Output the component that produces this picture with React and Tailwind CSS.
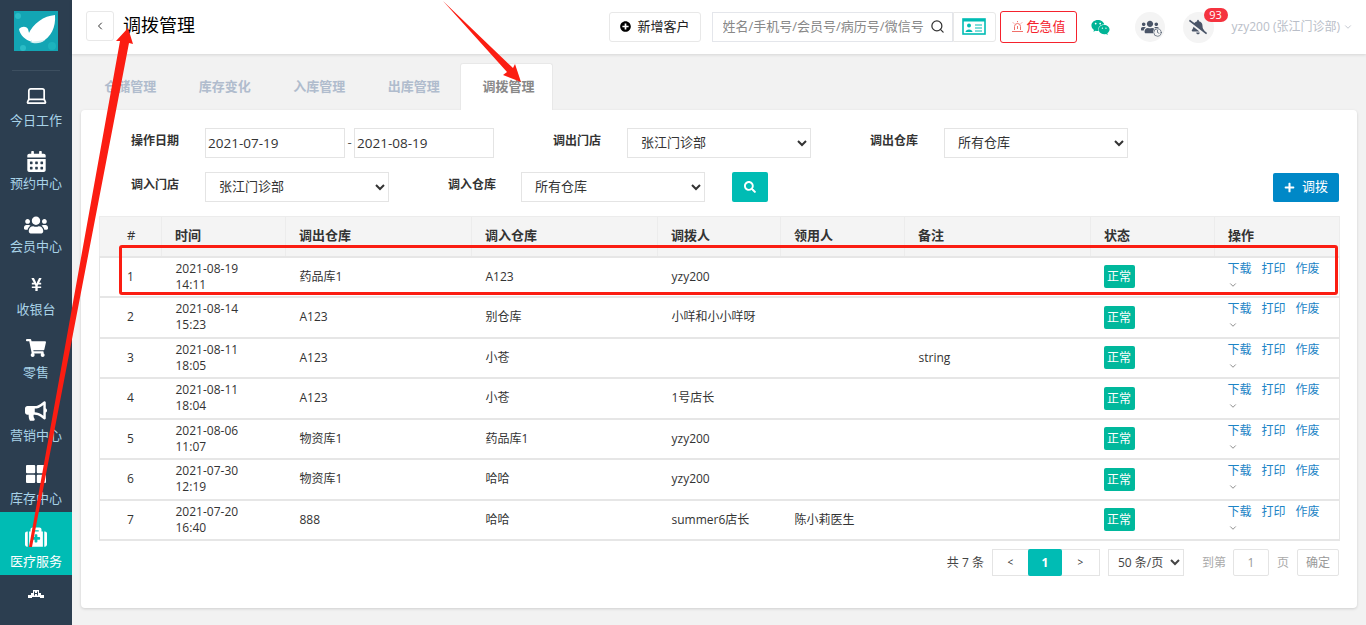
import React from 'react';
import { FaCalendarAlt, FaUsers, FaYenSign, FaShoppingCart, FaBullhorn, FaMedkit, FaPlusCircle, FaPlus, FaSearch, FaWeixin, FaBellSlash } from 'react-icons/fa';
import { Laptop, Search, ChevronDown, ChevronLeft, Clock } from 'lucide-react';

const menu = [
    { label: '今日工作', icon: <Laptop size={23} strokeWidth={1.8} /> },
    { label: '预约中心', icon: <FaCalendarAlt size={21} className="mt-[6px]" /> },
    { label: '会员中心', icon: <FaUsers size={24} className="mt-[6px]" /> },
    { label: '收银台', icon: <FaYenSign size={15} /> },
    { label: '零售', icon: <FaShoppingCart size={20} /> },
    { label: '营销中心', icon: <FaBullhorn size={22} /> },
    {
        label: '库存中心',
        icon: (
            <svg width="20" height="18" viewBox="0 0 20 18" fill="currentColor">
                <rect x="0" y="0" width="9.2" height="8.2" rx="1" />
                <rect x="10.8" y="0" width="9.2" height="8.2" rx="1" />
                <rect x="0" y="9.8" width="9.2" height="8.2" rx="1" />
                <rect x="10.8" y="9.8" width="9.2" height="8.2" rx="1" />
            </svg>
        ),
    },
    { label: '医疗服务', icon: <FaMedkit size={22} />, active: true },
];

const tabs = ['仓储管理', '库存变化', '入库管理', '出库管理', '调拨管理'];

const rows = [
    { id: 1, date: '2021-08-19', time: '14:11', out: '药品库1', into: 'A123', by: 'yzy200', taker: '', note: '' },
    { id: 2, date: '2021-08-14', time: '15:23', out: 'A123', into: '别仓库', by: '小咩和小小咩呀', taker: '', note: '' },
    { id: 3, date: '2021-08-11', time: '18:05', out: 'A123', into: '小苍', by: '', taker: '', note: 'string' },
    { id: 4, date: '2021-08-11', time: '18:04', out: 'A123', into: '小苍', by: '1号店长', taker: '', note: '' },
    { id: 5, date: '2021-08-06', time: '11:07', out: '物资库1', into: '药品库1', by: 'yzy200', taker: '', note: '' },
    { id: 6, date: '2021-07-30', time: '12:19', out: '物资库1', into: '哈哈', by: 'yzy200', taker: '', note: '' },
    { id: 7, date: '2021-07-20', time: '16:40', out: '888', into: '哈哈', by: 'summer6店长', taker: '陈小莉医生', note: '' },
];

const heads = [
    { t: '#', w: 'w-[62px]', c: 'pl-[27px]' },
    { t: '时间', w: 'w-[124px]', c: 'pl-[13px]' },
    { t: '调出仓库', w: 'w-[186px]', c: 'pl-[13px]' },
    { t: '调入仓库', w: 'w-[186px]', c: 'pl-[13px]' },
    { t: '调拨人', w: 'w-[123px]', c: 'pl-[13px]' },
    { t: '领用人', w: 'w-[124px]', c: 'pl-[13px]' },
    { t: '备注', w: 'w-[186px]', c: 'pl-[13px]' },
    { t: '状态', w: 'w-[124px]', c: 'pl-[13px]' },
    { t: '操作', w: 'w-[125px]', c: 'pl-[13px]' },
];

const Sidebar = () => (
    <aside className="w-[72px] shrink-0 h-[625px] bg-[#2c3e50] flex flex-col items-stretch overflow-hidden">
        <div className="h-[71px] shrink-0 pt-[11px] mx-3 border-b border-[#3d4f60]">
            <div className="ml-[2px] w-11 h-10 bg-[#13a5b4]">
                <svg width="44" height="40" viewBox="0 0 44 40">
                    <circle cx="4" cy="5" r="3" fill="#2bbcc6" />
                    <circle cx="9" cy="37" r="3" fill="#2bbcc6" />
                    <circle cx="38" cy="35" r="4" fill="#1cb3bd" />
                    <path d="M14 24 C19 12 30 5 41 4 C42 16 37 27 27 31 L18 31 C17 28 15 26 14 24 Z" fill="#fff" />
                    <path d="M5 18 C8 15 12 15 14 18 C15 23 17 27 18 31 C11 29 6 24 5 18 Z" fill="#fff" />
                    <path d="M16 31 L31 29 C27 33 20 33 16 31 Z" fill="#d5f0f2" />
                </svg>
            </div>
        </div>
        {menu.map((m) => (
            <div
                key={m.label}
                className={`h-[63px] shrink-0 flex flex-col items-center ${m.active ? 'bg-[#00bcb4] text-white' : 'text-[#a9d3e8]'}`}
            >
                <div className="h-[38px] pt-[11px] flex items-center justify-center text-white">{m.icon}</div>
                <div className="text-[13px] leading-[18px] mt-[2px]">{m.label}</div>
            </div>
        ))}
        <div className="flex justify-center pt-[15px] text-white">
            <svg width="16" height="9" viewBox="0 0 16 9" fill="currentColor">
                <path d="M5 0 H11 V3 H13 V5 H16 V8 H12 V7 H4 V8 H0 V5 H3 V3 H5 Z" />
                <path d="M6.5 1.5 V5.5 M9.5 1.5 V5.5 M6.5 3.5 H9.5" stroke="#2c3e50" strokeWidth="1" />
            </svg>
        </div>
    </aside>
);

const Header = () => (
    <header className="h-[54px] bg-white shadow-[0_1px_3px_rgba(0,0,0,0.12)] flex items-center pl-[14px] relative z-10">
        <button className="w-[28px] h-[30px] border border-[#e8e8e8] rounded-[3px] flex items-center justify-center text-[#333] -mt-[2px]">
            <ChevronLeft size={12} strokeWidth={2} />
        </button>
        <h1 className="ml-[9px] text-[18px] leading-6 text-black -mt-[4px]">调拨管理</h1>
        <div className="ml-auto flex items-center h-full">
            <button className="w-[92px] h-[30px] border border-[#e8e8e8] rounded-[3px] flex items-center justify-center gap-[7px] text-[13px] text-[#222] -mt-[1px]">
                <FaPlusCircle size={11} className="text-black" />
                新增客户
            </button>
            <div className="ml-[11px] w-[241px] h-[30px] border border-[#e4e6eb] flex items-center pl-[10px] pr-[7px] text-[13px] text-[#888] -mt-[1px]">
                <span className="flex-1 whitespace-nowrap overflow-hidden">姓名/手机号/会员号/病历号/微信号</span>
                <Search size={15} className="text-[#333]" />
            </div>
            <button className="w-[43px] h-[30px] border border-[#e8e8e8] rounded-r-[3px] flex items-center justify-center -mt-[1px]">
                <svg width="24" height="17" viewBox="0 0 24 17">
                    <rect x="1" y="1" width="22" height="15" fill="none" stroke="#00bcb4" strokeWidth="1.6" />
                    <rect x="1" y="1" width="22" height="2.5" fill="#00bcb4" />
                    <circle cx="7" cy="7.5" r="2" fill="#00bcb4" />
                    <path d="M3.5 14 C3.5 10.5 10.5 10.5 10.5 14 Z" fill="#00bcb4" />
                    <path d="M13 7 H20 M13 10 H20 M13 13 H20" stroke="#00bcb4" strokeWidth="1" />
                </svg>
            </button>
            <button className="ml-1 w-[77px] h-8 border border-[#f5222d] rounded-[3px] flex items-center justify-center gap-[3px] text-[13px] text-[#f5222d] -mt-[1px]">
                <svg width="13" height="13" viewBox="0 0 13 13" fill="none" stroke="#f0706a" strokeWidth="1">
                    <path d="M3.5 10 V6.5 A3 3 0 0 1 9.5 6.5 V10" />
                    <path d="M1 11.5 H12 M6.5 1 V2.2 M2 2.5 L3 3.5 M11 2.5 L10 3.5 M6.5 6 V9" />
                </svg>
                危急值
            </button>
            <div className="ml-[14px] w-[20px] flex justify-center">
                <FaWeixin size={19} className="text-[#00b496]" />
            </div>
            <div className="ml-[24px] relative w-[30px] h-[30px] rounded-full bg-[#f4f4f4] flex items-center justify-center text-[#4a5568]">
                <FaUsers size={18} />
                <Clock size={9} className="absolute right-[3px] bottom-[5px] bg-[#f4f4f4] rounded-full" />
            </div>
            <div className="ml-[18px] relative w-[31px] h-[31px] rounded-full bg-[#f4f4f4] flex items-center justify-center text-[#4a5568]">
                <FaBellSlash size={18} />
                <span className="absolute -top-[4px] left-[21px] w-6 h-[14px] rounded-full bg-[#f5333f] text-white text-[11px] leading-[14px] text-center">93</span>
            </div>
            <div className="ml-[18px] mr-[13px] flex items-center gap-[3px] text-[12px] text-[#b9bec8] whitespace-nowrap">
                yzy200 (张江门诊部)
                <ChevronDown size={10} strokeWidth={2} />
            </div>
        </div>
    </header>
);

const Label = ({ className, children }) => (
    <span className={`text-[12px] font-bold text-[#333] -mt-[4px] ${className}`}>{children}</span>
);

const Select = ({ className, children }) => (
    <select className={`h-[30px] border border-[#e4e4e4] bg-white pl-[9px] pb-[2px] text-[13px] text-[#333] ${className}`}>
        <option>{children}</option>
    </select>
);

const Filters = () => (
    <div className="pl-[50px] pr-[18px] pt-[18px]">
        <div className="flex items-center h-[30px]">
            <Label className="w-[74px]">操作日期</Label>
            <div className="w-[140px] h-[30px] border border-[#e4e4e4] pl-[2px] text-[13.5px] leading-[28px] text-[#333]">2021-07-19</div>
            <span className="w-[9px] text-center text-[13px] text-[#555]">-</span>
            <div className="w-[140px] h-[30px] border border-[#e4e4e4] pl-[2px] text-[13.5px] leading-[28px] text-[#333]">2021-08-19</div>
            <Label className="ml-[59px] w-[74px]">调出门店</Label>
            <Select className="w-[184px]">张江门诊部</Select>
            <Label className="ml-[59px] w-[74px]">调出仓库</Label>
            <Select className="w-[184px]">所有仓库</Select>
        </div>
        <div className="flex items-center h-[30px] mt-[14px]">
            <Label className="w-[74px]">调入门店</Label>
            <Select className="w-[184px]">张江门诊部</Select>
            <Label className="ml-[59px] w-[73px]">调入仓库</Label>
            <Select className="w-[184px]">所有仓库</Select>
            <button className="ml-[27px] -mt-[1px] w-9 h-[30px] rounded-[2px] bg-[#00bcb4] text-white flex items-center justify-center">
                <FaSearch size={12} />
            </button>
            <button className="ml-auto w-[66px] h-[29px] rounded-[2px] bg-[#0088c7] text-white text-[13px] flex items-center justify-center gap-[7px]">
                <FaPlus size={11} />
                调拨
            </button>
        </div>
    </div>
);

const Table = () => (
    <table className="ml-[18px] mt-[14px] w-[1240px] table-fixed border-collapse text-[12px] text-[#333]">
        <thead>
            <tr className="h-[40px] bg-[#f4f4f4]">
                {heads.map((h) => (
                    <th key={h.t} className={`${h.w} ${h.c} border-x border-t border-[#ececec] text-left text-[13px] font-bold text-[#333] align-bottom pb-[14px] leading-none`}>
                        <span className={h.t === '#' ? 'font-normal' : ''}>{h.t}</span>
                    </th>
                ))}
            </tr>
        </thead>
        <tbody>
            {rows.map((r) => (
                <tr key={r.id} className="h-[40.5px] border-t-2 border-[#e6e6e6]">
                    <td className="pl-[27px] border-l border-[#e6e6e6] text-[12px]">{r.id}</td>
                    <td className="pl-[14px] leading-4 whitespace-nowrap">{r.date}<br />{r.time}</td>
                    <td className="pl-[14px]">{r.out}</td>
                    <td className="pl-[14px]">{r.into}</td>
                    <td className="pl-[14px] whitespace-nowrap">{r.by}</td>
                    <td className="pl-[14px] whitespace-nowrap">{r.taker}</td>
                    <td className="pl-[14px]">{r.note}</td>
                    <td className="pl-[13px]">
                        <span className="inline-block w-[31px] h-[23px] rounded-[2px] bg-[#00b89c] text-white text-center leading-[23px]">正常</span>
                    </td>
                    <td className="pl-[13px] border-r border-[#e6e6e6] align-top pt-[3px]">
                        <div className="flex gap-[10px] text-[#1c84c6] leading-4">
                            <span>下载</span><span>打印</span><span>作废</span>
                        </div>
                        <ChevronDown size={10} className="text-[#777] mt-[3px]" />
                    </td>
                </tr>
            ))}
            <tr className="border-t-2 border-[#e6e6e6]"></tr>
        </tbody>
    </table>
);

const Pagination = () => (
    <div className="flex justify-end items-center mt-[9px] pr-[18px] text-[12px] text-[#555]">
        <span className="mr-2 text-[#444]">共 7 条</span>
        <div className="flex h-[27px] border border-[#e4e4e4] w-[108px]">
            <span className="w-[35px] flex items-center justify-center text-[10px] text-[#333]">&lt;</span>
            <span className="w-[34px] -my-px bg-[#00bcb4] rounded-[2px] text-white font-bold flex items-center justify-center">1</span>
            <span className="flex-1 flex items-center justify-center text-[10px] text-[#333]">&gt;</span>
        </div>
        <select className="ml-2 w-[76px] h-[27px] border border-[#e4e4e4] bg-white pl-[5px] text-[12px] text-[#444]">
            <option>50 条/页</option>
        </select>
        <span className="ml-[18px] text-[#aaa]">到第</span>
        <span className="ml-[7px] w-9 h-[27px] border border-[#e4e4e4] rounded-[2px] text-[#999] flex items-center justify-center">1</span>
        <span className="ml-[8px] text-[#aaa]">页</span>
        <span className="ml-[8px] w-[42px] h-[27px] border border-[#e4e4e4] rounded-[2px] text-[#999] flex items-center justify-center">确定</span>
    </div>
);

// 截图上的红色标注
const Annotations = () => (
    <div className="absolute inset-0 pointer-events-none z-20">
        <svg className="absolute inset-0" width="1366" height="625" viewBox="0 0 1366 625" fill="#fb1d12">
            <polygon points="128,28 133,44 129,43 32,547 29,547 120,41 116,41" />
            <polygon points="443,1 513,68 515,64 521,82 503,75 507,72" />
        </svg>
        <div className="absolute left-[119px] top-[245px] w-[1219px] h-[50px] border-[3px] border-[#fb1d12] rounded-[3px]"></div>
    </div>
);

const App = () => {
    return (
        <div className="relative w-[1366px] h-[625px] overflow-hidden flex bg-[#f2f2f2] font-['Open_Sans','Noto_Sans_CJK_SC',sans-serif]">
            <Sidebar />
            <main className="flex-1 min-w-0">
                <Header />
                <div className="flex pl-[11px] pt-[9px] h-[56px]">
                    {tabs.map((t, i) => (
                        <div
                            key={t}
                            className={i === 4
                                ? 'w-[93px] h-[47px] -ml-[1px] pl-[4px] bg-white border border-b-0 border-[#e8e8e8] rounded-t-[3px] text-[13px] font-bold text-[#888] flex items-center justify-center'
                                : 'w-[94.5px] h-[47px] text-[13px] font-bold text-[#b0bccd] flex items-center justify-center'}
                        >
                            {t}
                        </div>
                    ))}
                </div>
                <section className="ml-[9px] w-[1276px] h-[498px] bg-white rounded-[4px] shadow-[0_1px_3px_rgba(0,0,0,0.15)]">
                    <Filters />
                    <Table />
                    <Pagination />
                </section>
            </main>
            <Annotations />
        </div>
    );
};

export default App;
